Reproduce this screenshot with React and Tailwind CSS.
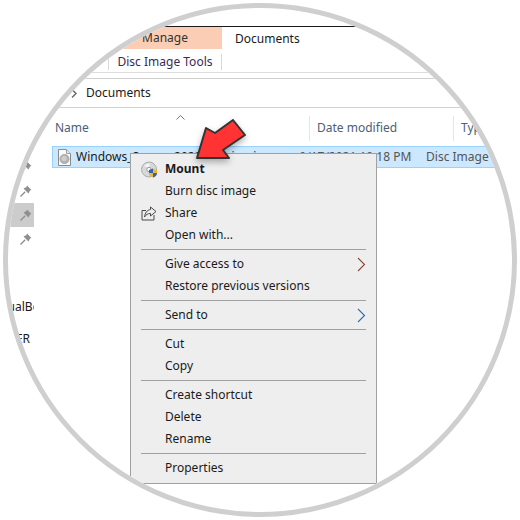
import React from 'react';

const FONT = "font-['Noto_Sans',sans-serif]";

function Pin() {
  return (
    <svg width="14" height="14" viewBox="0 0 14 14" className="shrink-0">
      <path d="M8 1.5 L12.5 6 L11 6.5 L9.5 9.5 L4.5 4.5 L7.5 3 Z" fill="#8f8f8f" />
      <path d="M6.2 7.8 L1.5 12.5" stroke="#8f8f8f" strokeWidth="1.4" />
    </svg>
  );
}

function FileDisc() {
  return (
    <svg width="13" height="17" viewBox="0 0 13 17" className="shrink-0">
      <path d="M0.5 0.5 H8.5 L12.5 4.5 V16.5 H0.5 Z" fill="#fafafa" stroke="#8a8a8a" />
      <path d="M8.5 0.5 V4.5 H12.5" fill="#e8e8e8" stroke="#a0a0a0" />
      <circle cx="6.5" cy="10" r="4.5" fill="#b5b5b5" stroke="#a5a5a5" />
      <circle cx="6" cy="9.5" r="2.5" fill="#cfcfcf" />
    </svg>
  );
}

function MountIcon() {
  return (
    <svg width="17" height="17" viewBox="0 0 17 17">
      <circle cx="8" cy="8.5" r="7.5" fill="#d6d8da" stroke="#a9acb0" />
      <path d="M3 5 A6 6 0 0 1 9 2.5 L8 7 Z" fill="#f4f4f4" />
      <circle cx="8" cy="8.5" r="2.2" fill="#fafafa" stroke="#9a9a9a" />
      <path d="M8 9 L12 7.5 L16 9 V12.5 C16 14.5 14 16 12 16.5 C10 16 8 14.5 8 12.5 Z" fill="#f2b632" />
      <path d="M12 7.5 V12 H8 V9 Z M12 12 H16 C16 14.5 14 16 12 16.5 Z" fill="#2f67b5" />
    </svg>
  );
}

function ShareIcon() {
  return (
    <svg width="16" height="15" viewBox="0 0 16 15" fill="none" stroke="#4a4a4a">
      <path d="M5 4.5 H1 V14 H13 V9" />
      <path d="M9.5 1 L15 5.5 L9.5 10 V7.5 C7 7.5 5 8.5 3.5 11 C4 7 6 4 9.5 3.5 Z" fill="#eeeeee" />
    </svg>
  );
}

function Chevron({ color }) {
  return (
    <svg width="9" height="15" viewBox="0 0 9 15" fill="none" className="shrink-0">
      <path d="M1 1 L7.5 7.5 L1 14" stroke={color} strokeWidth="1.1" />
    </svg>
  );
}

function MenuItem({ label, bold, icon, submenu }) {
  return (
    <div className={`h-[22px] flex items-center text-[12px] text-[#1a1a1a] ${bold ? 'font-bold' : ''}`}>
      <div className="w-[34px] pl-[10px] flex items-center shrink-0">{icon}</div>
      <span className="flex-1 whitespace-nowrap">{label}</span>
      {submenu && <div className="pr-[10px] flex"><Chevron color={submenu} /></div>}
    </div>
  );
}

function Sep() {
  return <div className="h-px bg-[#a0a0a0] my-[3px] ml-[10px] mr-[10px]" />;
}

function ContextMenu() {
  return (
    <div className="absolute left-[122px] top-[145px] w-[247px] bg-[#eeeeee] border border-[#a0a0a0] py-[4px]">
      <MenuItem label="Mount" bold icon={<MountIcon />} />
      <MenuItem label="Burn disc image" />
      <MenuItem label="Share" icon={<ShareIcon />} />
      <MenuItem label="Open with..." />
      <Sep />
      <MenuItem label="Give access to" submenu="#8a4b3a" />
      <MenuItem label="Restore previous versions" />
      <Sep />
      <MenuItem label="Send to" submenu="#2f6fb0" />
      <Sep />
      <MenuItem label="Cut" />
      <MenuItem label="Copy" />
      <Sep />
      <MenuItem label="Create shortcut" />
      <MenuItem label="Delete" />
      <MenuItem label="Rename" />
      <Sep />
      <MenuItem label="Properties" />
    </div>
  );
}

function Arrow() {
  return (
    <svg width="64" height="56" viewBox="0 0 64 56" className="absolute left-[180px] top-[104px] drop-shadow-[0_3px_3px_rgba(0,0,0,0.3)]">
      <path d="M9 46 L18 16 L27 21 L45 8 L57 23 L35 38 L41 46 Z" fill="#ff3333" stroke="#333333" strokeWidth="2" strokeLinejoin="round" />
    </svg>
  );
}

function Nav() {
  return (
    <div className="w-[26px] shrink-0 overflow-hidden text-[12px] text-[#1a1a1a]">
      <div className="h-[47px]" />
      {[false, false, true, false].map((sel, i) => (
        <div key={i} className={`h-[24px] flex items-center justify-end pr-[1px] ${sel ? 'bg-[#cccccc]' : ''}`}>
          <Pin />
        </div>
      ))}
      <div className="h-[44px]" />
      <div className="h-[24px] flex items-center whitespace-nowrap -ml-[20px]">VirtualBox VMs</div>
      <div className="h-[8px]" />
      <div className="h-[24px] flex items-center whitespace-nowrap -ml-[20px]">SERVER</div>
    </div>
  );
}

function FileList() {
  return (
    <div className="flex-1 min-w-0 text-[12px]">
      <div className="h-[38px] flex items-center text-[#4c607a]">
        <div className="w-[275px] pl-[21px] h-[25px] flex items-center relative mt-[2px]">
          Name
          <svg width="9" height="5" viewBox="0 0 9 5" fill="none" className="absolute left-[142px] -top-[1px]">
            <path d="M0.5 4.5 L4.5 0.5 L8.5 4.5" stroke="#777777" />
          </svg>
        </div>
        <div className="w-[144px] pl-[7px] h-[25px] flex items-center border-l border-[#e5e5e5] mt-[2px]">Date modified</div>
        <div className="pl-[7px] h-[25px] flex items-center border-l border-[#e5e5e5] mt-[2px]">Type</div>
      </div>
      <div className="h-[22px] ml-[18px] flex items-center bg-[#cce8ff] border border-[#99d1ff]">
        <div className="w-[233px] pl-[5px] flex items-center gap-[5px] whitespace-nowrap text-[#1a1a1a]">
          <FileDisc />
          Windows_Server_2022_Preview.iso
        </div>
        <div className="w-[144px] pl-[7px] text-[#555555] whitespace-nowrap ml-[23px]">9/17/2021 10:18 PM</div>
        <div className="pl-[7px] text-[#555555] whitespace-nowrap">Disc Image File</div>
      </div>
    </div>
  );
}

export default function App() {
  return (
    <div className={`w-[520px] h-[520px] bg-white overflow-hidden p-[3px] ${FONT}`}>
      <div className="w-[514px] h-[514px] rounded-full border-[5px] border-[#cfcfcf] overflow-hidden relative bg-white">
        <div className="h-[18px]" />
        <div className="h-px bg-[#1a1a1a]" />
        <div className="flex h-[45px] text-[12px] text-[#333333]">
          <div className="w-[100px] shrink-0" />
          <div className="w-[114px] shrink-0">
            <div className="h-[22px] bg-[#fccdb5] flex items-center justify-center">Manage</div>
            <div className="h-[16px] mt-[5px] border-l border-r border-[#d9d9d9] flex items-center justify-center text-[#3a2a55]">Disc Image Tools</div>
          </div>
          <div className="pl-[13px] pt-[3px] text-[#1a1a1a]">Documents</div>
        </div>
        <div className="h-px bg-[#dcdcdc]" />
        <div className="h-[5px]" />
        <div className="h-px bg-[#d0d0d0]" />
        <div className="h-[28px] flex items-center text-[12px] text-[#1a1a1a]">
          <svg width="6" height="9" viewBox="0 0 6 9" fill="none" className="ml-[63px]">
            <path d="M1 0.5 L5 4.5 L1 8.5" stroke="#666666" strokeWidth="1.4" />
          </svg>
          <span className="ml-[9px]">Documents</span>
        </div>
        <div className="h-px bg-[#d0d0d0]" />
        <div className="flex">
          <Nav />
          <FileList />
        </div>
        <ContextMenu />
        <Arrow />
      </div>
    </div>
  );
}
